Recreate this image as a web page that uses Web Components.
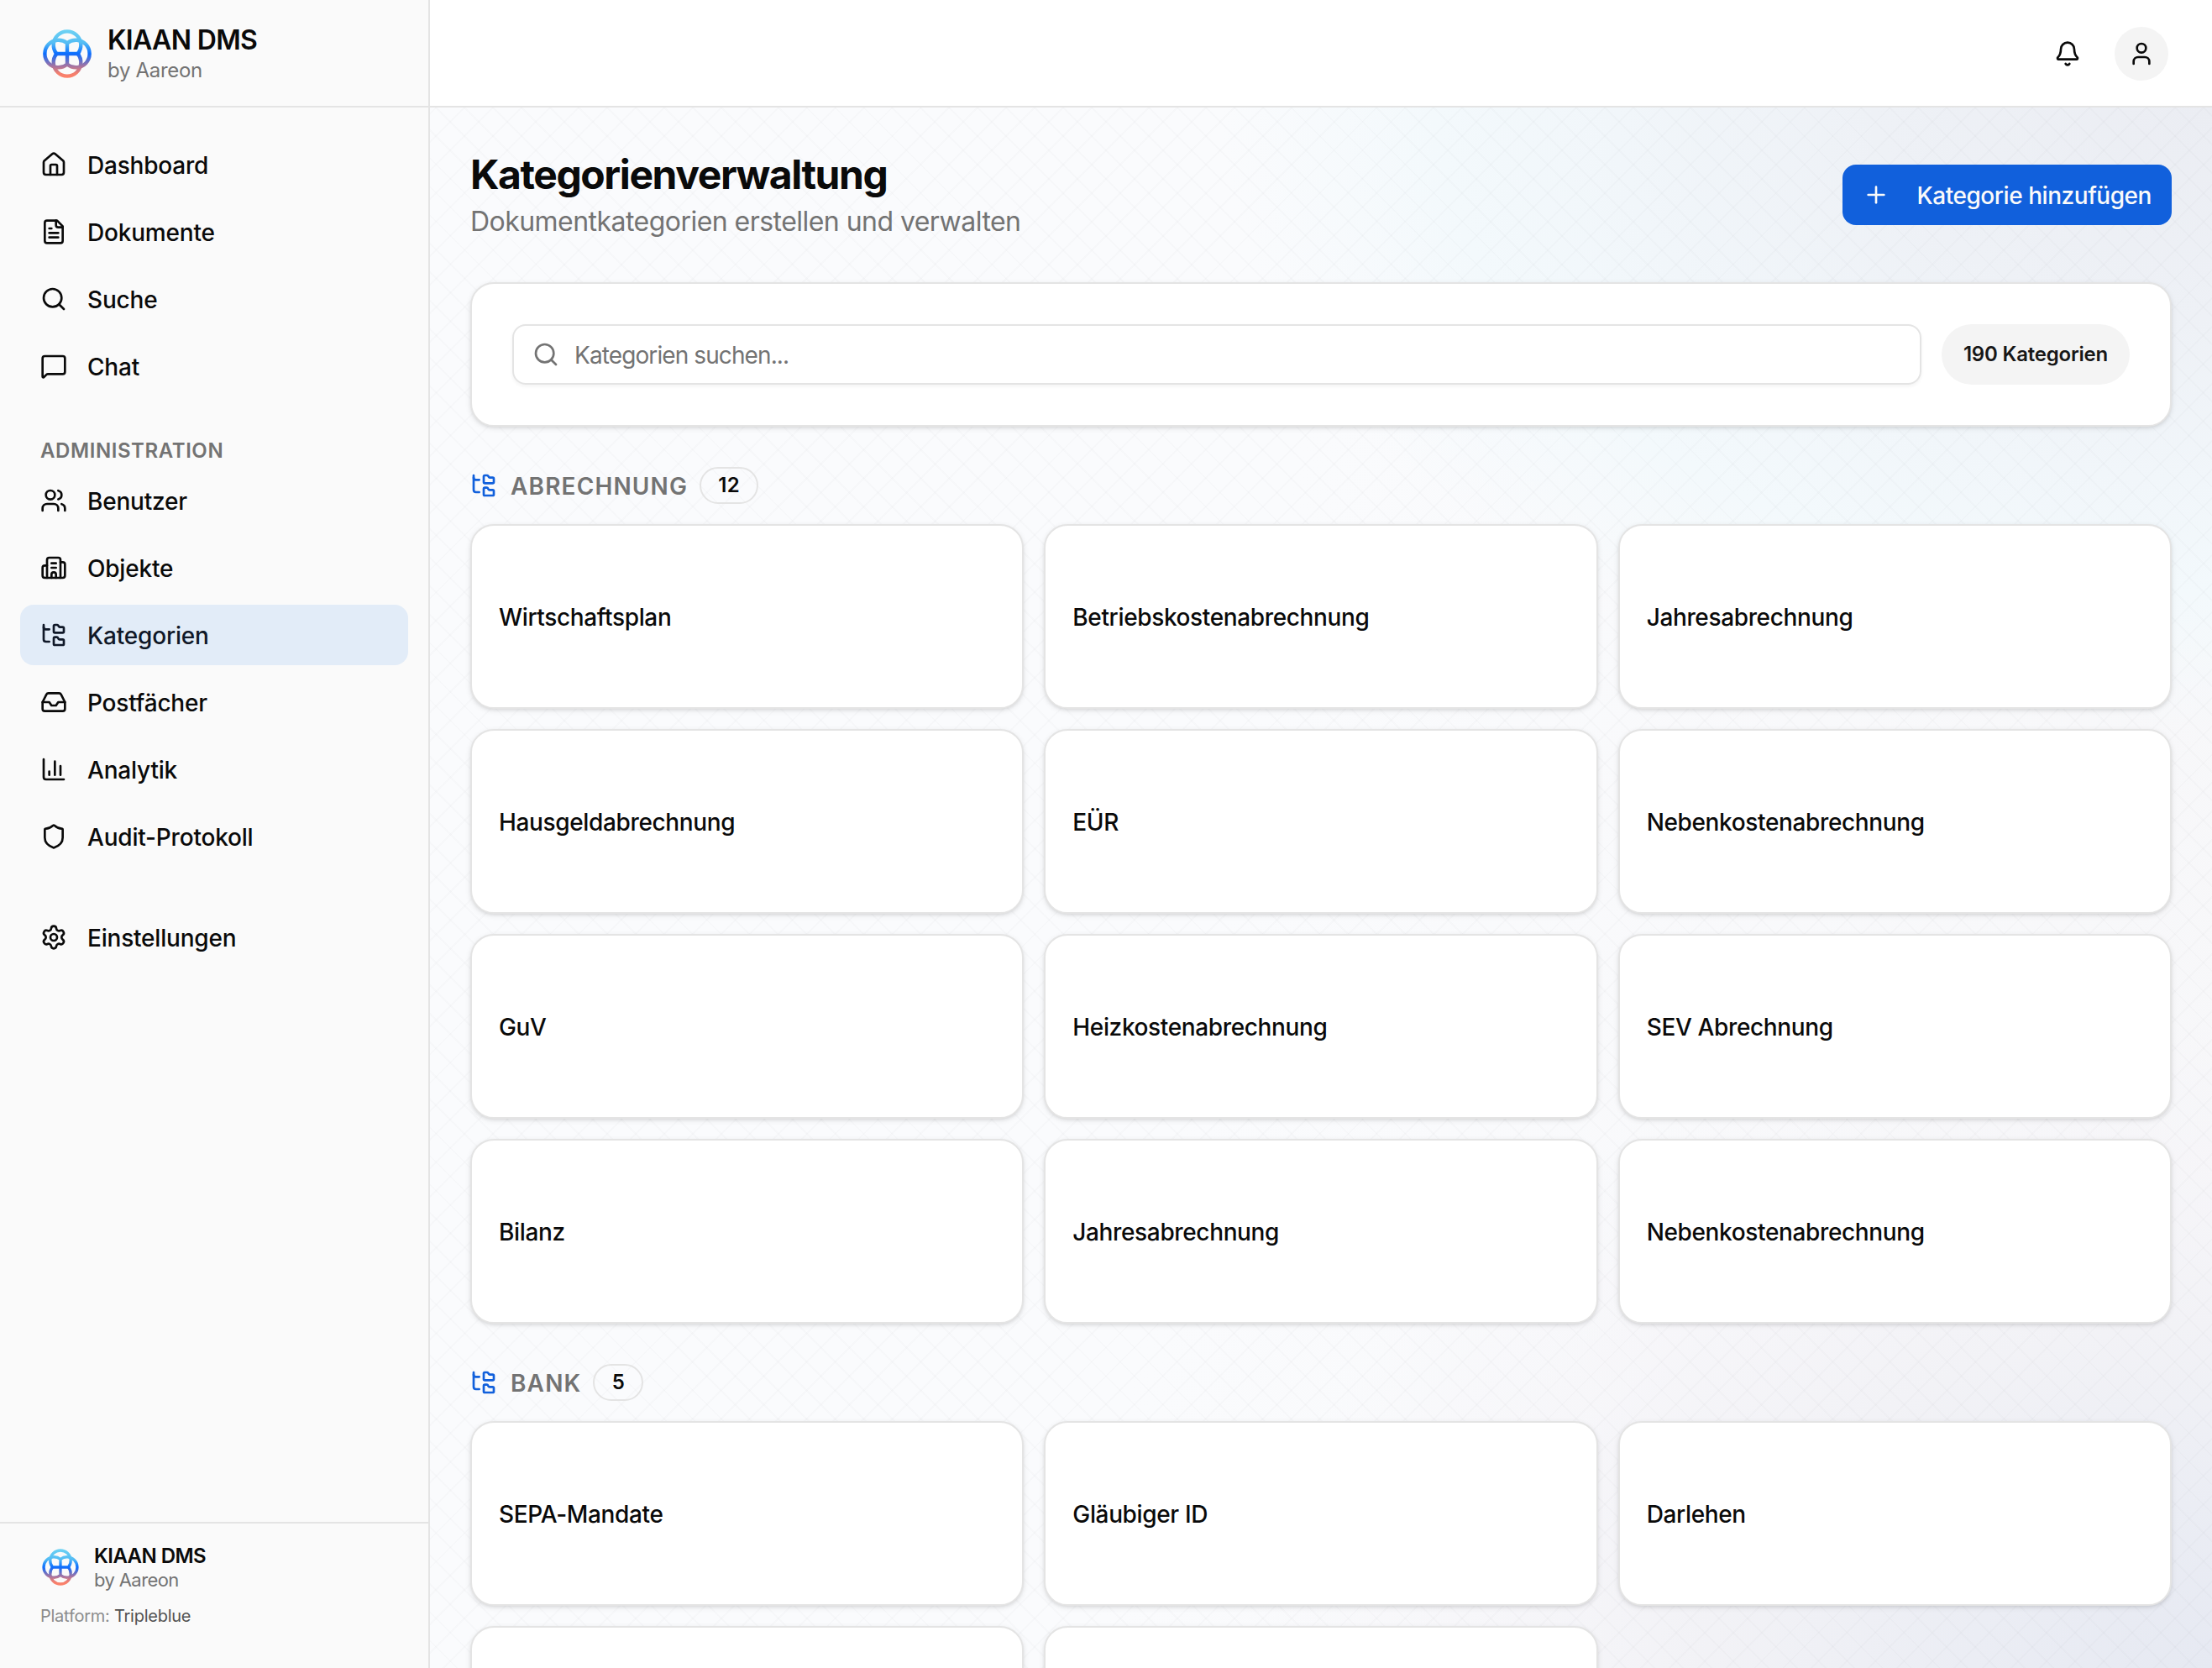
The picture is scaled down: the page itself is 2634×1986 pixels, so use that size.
<!DOCTYPE html>
<html lang="de">
<head>
<meta charset="utf-8">
<title>KIAAN DMS - Kategorienverwaltung</title>
<style>
  :root {
    --border: #e4e4e4;
    --muted: #737373;
    --primary: #1160dc;
    --secondary: #f4f4f4;
  }

  body {
    margin: 0;
    height: 1986px;
    overflow: hidden;
    background: #ffffff;
    color: #0a0a0a;
    font-family: Inter, 'Liberation Sans', sans-serif;
    font-size: 28px;
    line-height: 40px;
    letter-spacing: -0.2px;
  }
</style>
</head>
<body>
<app-shell>
  <app-sidebar slot="sidebar">
    <app-brand slot="header"></app-brand>
    <nav-item icon="house">Dashboard</nav-item>
    <nav-item icon="file">Dokumente</nav-item>
    <nav-item icon="search">Suche</nav-item>
    <nav-item icon="message">Chat</nav-item>
    <nav-label>ADMINISTRATION</nav-label>
    <nav-item icon="users">Benutzer</nav-item>
    <nav-item icon="building">Objekte</nav-item>
    <nav-item icon="tree" active>Kategorien</nav-item>
    <nav-item icon="inbox">Postfächer</nav-item>
    <nav-item icon="chart">Analytik</nav-item>
    <nav-item icon="shield">Audit-Protokoll</nav-item>
    <nav-item icon="settings" spaced>Einstellungen</nav-item>
    <app-brand slot="footer" small></app-brand>
    <platform-note slot="footer">Tripleblue</platform-note>
  </app-sidebar>
  <app-topbar slot="topbar"></app-topbar>
  <page-header>
    Kategorienverwaltung
    <span slot="subtitle">Dokumentkategorien erstellen und verwalten</span>
    <app-button slot="action" icon="plus">Kategorie hinzufügen</app-button>
  </page-header>
  <search-card placeholder="Kategorien suchen...">190 Kategorien</search-card>
  <category-group name="ABRECHNUNG" count="12">
    <category-card>Wirtschaftsplan</category-card>
    <category-card>Betriebskostenabrechnung</category-card>
    <category-card>Jahresabrechnung</category-card>
    <category-card>Hausgeldabrechnung</category-card>
    <category-card>EÜR</category-card>
    <category-card>Nebenkostenabrechnung</category-card>
    <category-card>GuV</category-card>
    <category-card>Heizkostenabrechnung</category-card>
    <category-card>SEV Abrechnung</category-card>
    <category-card>Bilanz</category-card>
    <category-card>Jahresabrechnung</category-card>
    <category-card>Nebenkostenabrechnung</category-card>
  </category-group>
  <category-group name="BANK" count="5">
    <category-card>SEPA-Mandate</category-card>
    <category-card>Gläubiger ID</category-card>
    <category-card>Darlehen</category-card>
    <category-card></category-card>
    <category-card></category-card>
  </category-group>
</app-shell>

<script>
/** Inner markup of the 24x24 stroke icons */
const ICONS = {
  house: '<path d="M15 21v-8a1 1 0 0 0-1-1h-4a1 1 0 0 0-1 1v8"/><path d="M3 10a2 2 0 0 1 .709-1.528l7-6a2 2 0 0 1 2.582 0l7 6A2 2 0 0 1 21 10v9a2 2 0 0 1-2 2H5a2 2 0 0 1-2-2z"/>',
  file: '<path d="M15 2H6a2 2 0 0 0-2 2v16a2 2 0 0 0 2 2h12a2 2 0 0 0 2-2V7Z"/><path d="M14 2v4a2 2 0 0 0 2 2h4"/><path d="M10 9H8"/><path d="M16 13H8"/><path d="M16 17H8"/>',
  search: '<path d="m21 21-4.34-4.34"/><circle cx="11" cy="11" r="8"/>',
  message: '<path d="M22 17a2 2 0 0 1-2 2H6.828a2 2 0 0 0-1.414.586l-2.202 2.202A.71.71 0 0 1 2 21.286V5a2 2 0 0 1 2-2h16a2 2 0 0 1 2 2z"/>',
  users: '<path d="M16 21v-2a4 4 0 0 0-4-4H6a4 4 0 0 0-4 4v2"/><path d="M16 3.128a4 4 0 0 1 0 7.744"/><path d="M22 21v-2a4 4 0 0 0-3-3.87"/><circle cx="9" cy="7" r="4"/>',
  building: '<path d="M10 12h4"/><path d="M10 8h4"/><path d="M14 21v-3a2 2 0 0 0-4 0v3"/><path d="M6 10H4a2 2 0 0 0-2 2v7a2 2 0 0 0 2 2h16a2 2 0 0 0 2-2V9a2 2 0 0 0-2-2h-2"/><path d="M6 21V5a2 2 0 0 1 2-2h8a2 2 0 0 1 2 2v16"/>',
  tree: '<path d="M20 10a1 1 0 0 0 1-1V6a1 1 0 0 0-1-1h-2.5a1 1 0 0 1-.8-.4l-.9-1.2A1 1 0 0 0 15 3h-2a1 1 0 0 0-1 1v5a1 1 0 0 0 1 1Z"/><path d="M20 21a1 1 0 0 0 1-1v-3a1 1 0 0 0-1-1h-2.9a1 1 0 0 1-.88-.55l-.42-.85a1 1 0 0 0-.92-.6H13a1 1 0 0 0-1 1v5a1 1 0 0 0 1 1Z"/><path d="M3 5a2 2 0 0 0 2 2h3"/><path d="M3 3v13a2 2 0 0 0 2 2h3"/>',
  inbox: '<path d="M22 12h-6l-2 3h-4l-2-3H2"/><path d="M5.45 5.11 2 12v6a2 2 0 0 0 2 2h16a2 2 0 0 0 2-2v-6l-3.45-6.89A2 2 0 0 0 16.76 4H7.24a2 2 0 0 0-1.79 1.11z"/>',
  chart: '<path d="M3 3v16a2 2 0 0 0 2 2h16"/><path d="M18 17V9"/><path d="M13 17V5"/><path d="M8 17v-3"/>',
  shield: '<path d="M20 13c0 5-3.5 7.5-7.66 8.95a1 1 0 0 1-.67-.01C7.5 20.5 4 18 4 13V6a1 1 0 0 1 1-1c2 0 4.5-1.2 6.24-2.72a1.17 1.17 0 0 1 1.52 0C14.51 3.81 17 5 19 5a1 1 0 0 1 1 1z"/>',
  settings: '<path d="M9.671 4.136a2.34 2.34 0 0 1 4.659 0 2.34 2.34 0 0 0 3.319 1.915 2.34 2.34 0 0 1 2.33 4.033 2.34 2.34 0 0 0 0 3.831 2.34 2.34 0 0 1-2.33 4.033 2.34 2.34 0 0 0-3.319 1.915 2.34 2.34 0 0 1-4.659 0 2.34 2.34 0 0 0-3.32-1.915 2.34 2.34 0 0 1-2.33-4.033 2.34 2.34 0 0 0 0-3.831A2.34 2.34 0 0 1 6.35 6.051a2.34 2.34 0 0 0 3.319-1.915"/><circle cx="12" cy="12" r="3"/>',
  bell: '<path d="M10.268 21a2 2 0 0 0 3.464 0"/><path d="M3.262 15.326A1 1 0 0 0 4 17h16a1 1 0 0 0 .74-1.673C19.41 13.956 18 12.499 18 8A6 6 0 0 0 6 8c0 4.499-1.411 5.956-2.738 7.326"/>',
  user: '<path d="M19 21v-2a4 4 0 0 0-4-4H9a4 4 0 0 0-4 4v2"/><circle cx="12" cy="7" r="4"/>',
  plus: '<path d="M5 12h14"/><path d="M12 5v14"/>'
};

/**
 * Attaches the shadow root and fills it in
 */
class BaseElement extends HTMLElement {
  constructor() {
    super();
    this.attachShadow({ mode: 'open' });
  }

  connectedCallback() {
    this.shadowRoot.innerHTML = this.render();
  }
}

class AppIcon extends BaseElement {
  render() {
    return `
      <style>
        :host {
          display: block;
          flex: none;
          width: 32px;
          height: 32px;
        }

        svg {
          display: block;
          fill: none;
          stroke: currentColor;
          stroke-width: 2;
          stroke-linecap: round;
          stroke-linejoin: round;
        }
      </style>
      <svg viewBox="0 0 24 24" width="32" height="32">${ICONS[this.getAttribute('name')]}</svg>
    `;
  }
}

class AppShell extends BaseElement {
  render() {
    return `
      <style>
        :host {
          display: grid;
          grid-template-columns: 512px 1fr;
          height: 100%;
        }

        .column {
          display: flex;
          flex-direction: column;
          min-width: 0;
          min-height: 0;
        }

        main {
          flex: 1;
          min-height: 0;
          overflow: hidden;
          box-sizing: border-box;
          padding: 48px;
          display: flex;
          flex-direction: column;
          gap: 48px;
          background:
            repeating-linear-gradient(45deg, transparent 0 22px, rgba(20, 20, 30, 0.015) 22px 24px),
            repeating-linear-gradient(-45deg, rgba(20, 20, 30, 0.015) 0 2px, transparent 2px 24px),
            radial-gradient(1180px 740px at 100% 0, #ebedf3 0%, #eef1f6 34%, #f1f6fa 60%, #f3f9fc 78%, rgba(243, 249, 252, 0) 100%),
            radial-gradient(1150px 780px at 100% 100%, #e6e9f2 0%, #ebedf4 25%, #f2f2f6 52%, rgba(245, 244, 248, 0.6) 75%, rgba(247, 247, 249, 0) 100%),
            linear-gradient(100deg, #fafbfd 45%, #f7f7f9 100%);
        }
      </style>
      <slot name="sidebar"></slot>
      <div class="column">
        <slot name="topbar"></slot>
        <main><slot></slot></main>
      </div>
    `;
  }
}

class AppSidebar extends BaseElement {
  render() {
    return `
      <style>
        :host {
          display: flex;
          flex-direction: column;
          box-sizing: border-box;
          height: 1986px;
          border-right: 2px solid var(--border);
          background: #fafafa;
        }

        header {
          box-sizing: border-box;
          height: 128px;
          padding: 2px 48px 0;
          display: flex;
          align-items: center;
          border-bottom: 2px solid var(--border);
        }

        nav {
          flex: 1;
          padding: 32px 24px;
          display: flex;
          flex-direction: column;
          gap: 8px;
        }

        footer {
          box-sizing: border-box;
          height: 174px;
          padding: 23px 48px 0;
          border-top: 2px solid var(--border);
        }
      </style>
      <header><slot name="header"></slot></header>
      <nav><slot></slot></nav>
      <footer><slot name="footer"></slot></footer>
    `;
  }
}

/**
 * Logo with product name, "small" is the footer size
 */
class AppBrand extends BaseElement {
  render() {
    return `
      <style>
        :host {
          display: flex;
          align-items: center;
          gap: 16px;
        }

        svg {
          flex: none;
          width: 64px;
          height: 64px;
          fill: none;
          stroke: url(#tint);
          stroke-width: 4.4;
        }

        .name {
          font-size: 32px;
          line-height: 40px;
          font-weight: 600;
          letter-spacing: -0.67px;
        }

        .by {
          font-size: 24px;
          line-height: 32px;
          letter-spacing: -0.3px;
          color: var(--muted);
        }

        :host([small]) svg {
          width: 48px;
          height: 48px;
        }

        :host([small]) .name {
          padding-top: 1px;
          font-size: 24px;
          line-height: 29px;
          letter-spacing: -0.57px;
        }

        :host([small]) .by {
          font-size: 22px;
          line-height: 28px;
          letter-spacing: -0.6px;
        }
      </style>
      <svg viewBox="0 0 64 64">
        <defs>
          <linearGradient id="tint" gradientUnits="userSpaceOnUse" x1="0" y1="3" x2="0" y2="61">
            <stop offset="0" stop-color="#6fd3f3"/>
            <stop offset=".28" stop-color="#54bdf4"/>
            <stop offset=".5" stop-color="#0a6cff"/>
            <stop offset=".76" stop-color="#a9749f"/>
            <stop offset=".9" stop-color="#f37f6e"/>
            <stop offset="1" stop-color="#ff8268"/>
          </linearGradient>
        </defs>
        <path d="M19.4 32A16.3 16.3 0 1 1 44.6 32Z"/>
        <path d="M19.4 32A16.3 16.3 0 1 0 44.6 32"/>
        <path d="M32 19.4A16.3 16.3 0 1 0 32 44.6Z"/>
        <path d="M32 19.4A16.3 16.3 0 1 1 32 44.6"/>
      </svg>
      <div>
        <div class="name">KIAAN DMS</div>
        <div class="by">by Aareon</div>
      </div>
    `;
  }
}

class PlatformNote extends BaseElement {
  render() {
    return `
      <style>
        :host {
          display: block;
          margin-top: 14px;
          font-size: 20px;
          line-height: 30px;
          letter-spacing: -0.25px;
          color: #8c8c8c;
        }

        span {
          color: #525252;
        }
      </style>
      Platform: <span><slot></slot></span>
    `;
  }
}

class NavItem extends BaseElement {
  render() {
    return `
      <style>
        :host {
          display: flex;
          align-items: center;
          gap: 24px;
          height: 72px;
          padding: 0 24px;
          border-radius: 16px;
          font-weight: 500;
        }

        :host([active]) {
          background: #e2ecf8;
          color: #101828;
        }

        :host([spaced]) {
          margin-top: 40px;
        }

        slot {
          display: block;
          padding-top: 2px;
        }
      </style>
      <app-icon name="${this.getAttribute('icon')}"></app-icon>
      <slot></slot>
    `;
  }
}

class NavLabel extends BaseElement {
  render() {
    return `
      <style>
        :host {
          display: block;
          margin-top: 40px;
          padding: 0 24px;
          font-size: 24px;
          line-height: 32px;
          font-weight: 600;
          letter-spacing: 0.58px;
          color: #737373;
        }

        slot {
          display: block;
          margin: 1px 0 -1px;
        }
      </style>
      <slot></slot>
    `;
  }
}

class AppTopbar extends BaseElement {
  render() {
    return `
      <style>
        :host {
          flex: none;
          box-sizing: border-box;
          height: 128px;
          padding: 2px 48px 0;
          display: flex;
          align-items: center;
          justify-content: flex-end;
          gap: 16px;
          border-bottom: 2px solid var(--border);
          background: #ffffff;
        }

        .action {
          width: 72px;
          height: 72px;
          display: grid;
          place-items: center;
        }

        .avatar {
          width: 64px;
          height: 64px;
          display: grid;
          place-items: center;
          border-radius: 50%;
          background: var(--secondary);
        }
      </style>
      <div class="action"><app-icon name="bell"></app-icon></div>
      <div class="action"><div class="avatar"><app-icon name="user"></app-icon></div></div>
    `;
  }
}

class PageHeader extends BaseElement {
  render() {
    return `
      <style>
        :host {
          flex: none;
          display: flex;
          align-items: center;
          justify-content: space-between;
          height: 112px;
        }

        h1 {
          margin: 0;
          font-size: 48px;
          line-height: 63px;
          font-weight: 700;
          letter-spacing: -1.42px;
        }

        p {
          margin: 0;
          font-size: 32px;
          line-height: 49px;
          letter-spacing: -0.54px;
          color: var(--muted);
        }
      </style>
      <div>
        <h1><slot></slot></h1>
        <p><slot name="subtitle"></slot></p>
      </div>
      <slot name="action"></slot>
    `;
  }
}

class AppButton extends BaseElement {
  render() {
    return `
      <style>
        :host {
          box-sizing: border-box;
          width: 392px;
          height: 72px;
          padding: 0 24px;
          display: flex;
          align-items: center;
          justify-content: space-between;
          border-radius: 16px;
          background: var(--primary);
          color: #fafafa;
          font-weight: 500;
          letter-spacing: -0.45px;
          white-space: nowrap;
        }

        slot {
          display: block;
          padding-top: 2px;
        }
      </style>
      <app-icon name="${this.getAttribute('icon')}"></app-icon>
      <slot></slot>
    `;
  }
}

class SearchCard extends BaseElement {
  render() {
    return `
      <style>
        :host {
          flex: none;
          box-sizing: border-box;
          height: 172px;
          padding: 48px;
          display: flex;
          gap: 24px;
          border: 2px solid var(--border);
          border-radius: 28px;
          background: #ffffff;
          box-shadow: 0 2px 6px rgba(0, 0, 0, 0.1), 0 2px 4px -2px rgba(0, 0, 0, 0.1);
        }

        label {
          flex: 1;
          box-sizing: border-box;
          padding: 0 22px;
          display: flex;
          align-items: center;
          gap: 18px;
          border: 2px solid var(--border);
          border-radius: 16px;
          box-shadow: 0 2px 4px rgba(0, 0, 0, 0.05);
          color: var(--muted);
        }

        input {
          flex: 1;
          padding: 2px 0 0;
          border: 0;
          outline: 0;
          background: none;
          font: inherit;
          letter-spacing: -0.9px;
        }

        input::placeholder {
          color: var(--muted);
        }

        .total {
          box-sizing: border-box;
          width: 224px;
          display: grid;
          place-items: center;
          border-radius: 36px;
          background: var(--secondary);
          color: #171717;
          font-size: 24px;
          font-weight: 600;
        }
      </style>
      <label>
        <app-icon name="search"></app-icon>
        <input type="text" placeholder="${this.getAttribute('placeholder')}">
      </label>
      <div class="total"><slot></slot></div>
    `;
  }
}

class CategoryGroup extends BaseElement {
  render() {
    return `
      <style>
        :host {
          flex: none;
          display: flex;
          flex-direction: column;
          gap: 24px;
        }

        .heading {
          display: flex;
          align-items: center;
          gap: 16px;
          height: 44px;
        }

        app-icon {
          color: var(--primary);
        }

        h2 {
          margin: 0 -2px 0 0;
          padding-top: 1px;
          font-size: 28px;
          line-height: 40px;
          font-weight: 600;
          letter-spacing: 1.15px;
          color: var(--muted);
        }

        .count {
          box-sizing: border-box;
          height: 44px;
          min-width: 60px;
          padding: 0 20px;
          display: grid;
          place-items: center;
          border: 2px solid var(--border);
          border-radius: 22px;
          font-size: 24px;
          font-weight: 600;
          letter-spacing: 0.4px;
        }

        .grid {
          display: grid;
          grid-template-columns: repeat(3, 1fr);
          gap: 24px;
        }
      </style>
      <div class="heading">
        <app-icon name="tree"></app-icon>
        <h2>${this.getAttribute('name')}</h2>
        <div class="count">${this.getAttribute('count')}</div>
      </div>
      <div class="grid"><slot></slot></div>
    `;
  }
}

class CategoryCard extends BaseElement {
  render() {
    return `
      <style>
        :host {
          box-sizing: border-box;
          height: 220px;
          padding: 0 32px;
          display: flex;
          align-items: center;
          border: 2px solid var(--border);
          border-radius: 28px;
          background: #ffffff;
          box-shadow: 0 2px 6px rgba(0, 0, 0, 0.1), 0 2px 4px -2px rgba(0, 0, 0, 0.1);
          font-weight: 500;
          letter-spacing: -0.36px;
        }

        slot {
          display: block;
          padding-top: 2px;
        }
      </style>
      <slot></slot>
    `;
  }
}

customElements.define('app-icon', AppIcon);
customElements.define('app-shell', AppShell);
customElements.define('app-sidebar', AppSidebar);
customElements.define('app-brand', AppBrand);
customElements.define('platform-note', PlatformNote);
customElements.define('nav-item', NavItem);
customElements.define('nav-label', NavLabel);
customElements.define('app-topbar', AppTopbar);
customElements.define('page-header', PageHeader);
customElements.define('app-button', AppButton);
customElements.define('search-card', SearchCard);
customElements.define('category-group', CategoryGroup);
customElements.define('category-card', CategoryCard);
</script>
</body>
</html>
